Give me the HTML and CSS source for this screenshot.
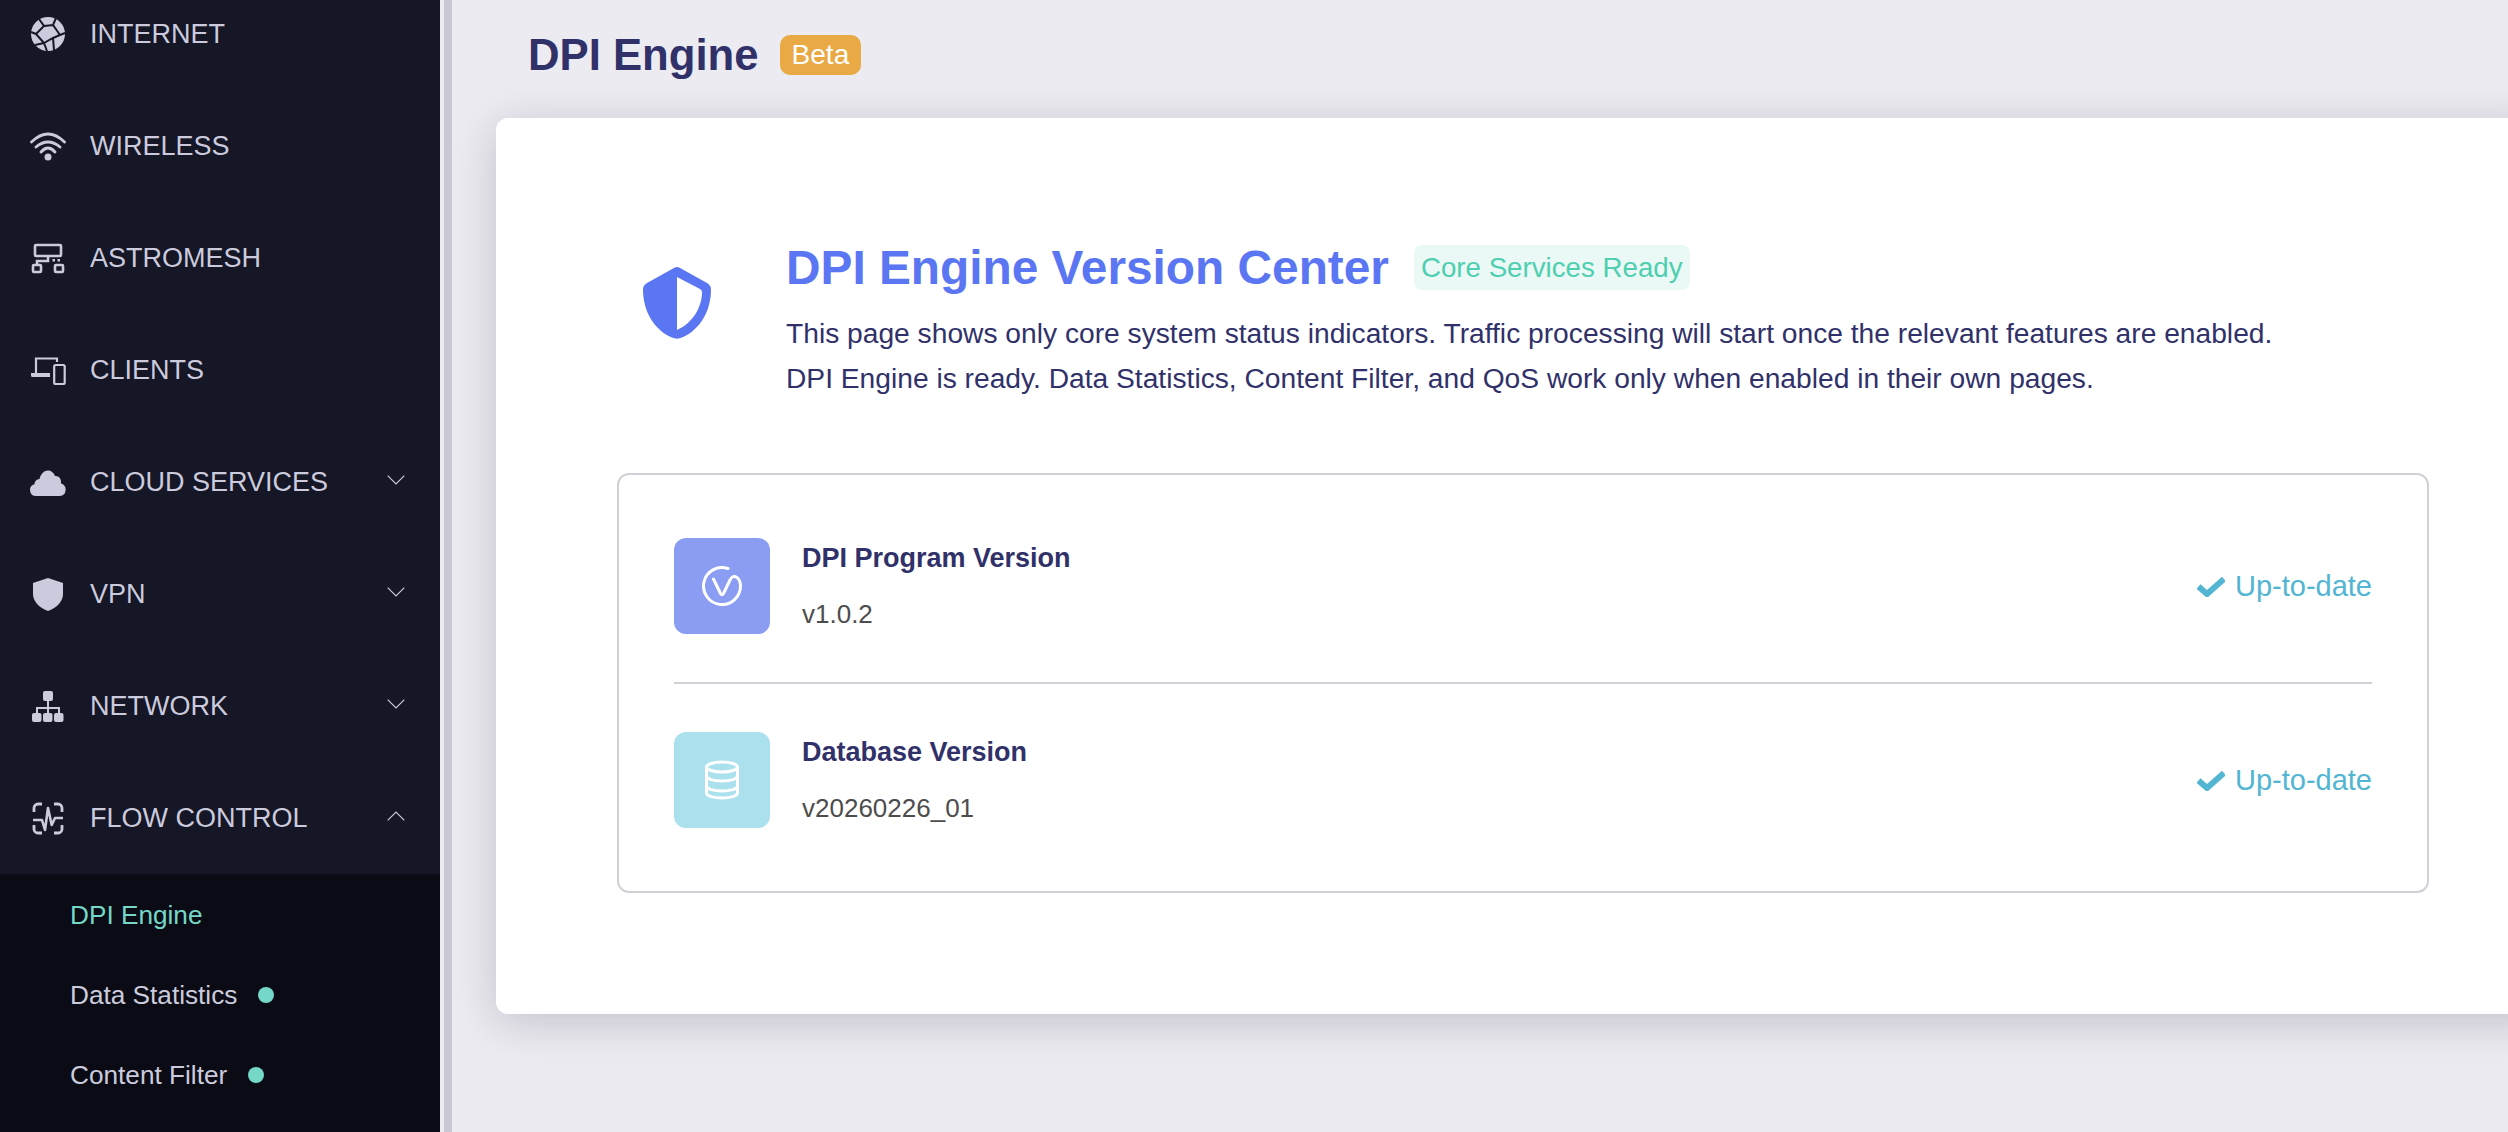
FILE: index.html
```html
<!DOCTYPE html>
<html lang="en">
<head>
    <meta charset="UTF-8">
    <meta name="viewport" content="width=device-width, initial-scale=1.0">
    <title>DPI Engine</title>
    <link rel="stylesheet" href="styles.css">
</head>
<body>
    <aside class="sidebar">
        <ul class="menu">
            <li class="menu-item">
                <svg class="menu-icon" viewBox="0 0 36 36"><circle cx="18" cy="18" r="17" fill="#cbcbdd"/><path d="M9 3l5 7-8 8 8 9 3 8M14 10l9-1 7 10-7 3-9 5M23 9l3-7M23 22l1 12M30 19l5-2M1 16l5 2M14 27l-9 2" fill="none" stroke="#151626" stroke-width="2"/></svg>
                <span>INTERNET</span>
            </li>
            <li class="menu-item">
                <svg class="menu-icon" viewBox="0 0 36 36"><path d="M1.500 14Q18-2 34.500 14M6 19Q18 9 30 19M11 24Q18 16 25 24" fill="none" stroke="#cbcbdd" stroke-width="2.800" stroke-linecap="round"/><circle cx="18" cy="29" r="3.500" fill="#cbcbdd"/></svg>
                <span>WIRELESS</span>
            </li>
            <li class="menu-item">
                <svg class="menu-icon" viewBox="0 0 36 36"><g fill="none" stroke="#cbcbdd" stroke-width="2.600"><rect x="5" y="5" width="26" height="11" rx="1"/><rect x="3" y="25" width="8" height="7" rx="1"/><rect x="25" y="25" width="8" height="7" rx="1"/><path d="M18 16v5H7v4"/></g><path d="M22.500 19H25v2.500h-2.500zM27.500 19H30v2.500h-2.500z" fill="#cbcbdd"/></svg>
                <span>ASTROMESH</span>
            </li>
            <li class="menu-item">
                <svg class="menu-icon" viewBox="0 0 36 36"><g fill="none" stroke="#cbcbdd" stroke-width="2.200"><path d="M6 22V6.500h21V10"/><rect x="24.200" y="13" width="10.500" height="19" rx="1.500"/></g><path d="M1 21h19v4H2.500A1.500 1.500 0 0 1 1 23.500z" fill="#cbcbdd"/></svg>
                <span>CLIENTS</span>
            </li>
            <li class="menu-item">
                <svg class="menu-icon" viewBox="0 0 36 36"><path d="M6 32a6 6 0 0 1-1.500-11.800C4.500 18 6.500 15 9.500 15 11 9.500 14 6.500 18 6.500c3.500 0 6 2.500 7 5.500 4-.5 6.500 3 6 7.500A6.400 6.400 0 0 1 30 32z" fill="#cbcbdd"/></svg>
                <span>CLOUD SERVICES</span>
                <svg class="chevron" viewBox="0 0 18 10"><path d="M.7.7L9 9l8.300-8.300"/></svg>
            </li>
            <li class="menu-item">
                <svg class="menu-icon" viewBox="0 0 36 36"><path d="M18 2l15 5v11c0 8-7 14-15 17C10 32 3 26 3 18V7z" fill="#cbcbdd"/></svg>
                <span>VPN</span>
                <svg class="chevron" viewBox="0 0 18 10"><path d="M.7.7L9 9l8.300-8.300"/></svg>
            </li>
            <li class="menu-item">
                <svg class="menu-icon" viewBox="0 0 36 36"><g fill="#cbcbdd"><rect x="13" y="3" width="10" height="10" rx="2"/><rect x="2" y="25" width="9.500" height="9" rx="2"/><rect x="13" y="25" width="9.500" height="9" rx="2"/><rect x="24" y="25" width="9.500" height="9" rx="2"/></g><path d="M18 13v12M7 25v-5h22v5" fill="none" stroke="#cbcbdd" stroke-width="2"/></svg>
                <span>NETWORK</span>
                <svg class="chevron" viewBox="0 0 18 10"><path d="M.7.7L9 9l8.300-8.300"/></svg>
            </li>
            <li class="menu-item">
                <svg class="menu-icon" viewBox="0 0 36 36"><path d="M4 12V8a4 4 0 0 1 4-4h4M24 4h4a4 4 0 0 1 4 4v4M4 25v4a4 4 0 0 0 4 4h4M24 33h4a4 4 0 0 0 4-4v-4" fill="none" stroke="#cbcbdd" stroke-width="2.800"/><path d="M3 20h9l3 10 3-22 3.700 17L25 18h8" fill="none" stroke="#cbcbdd" stroke-width="2.600" stroke-linejoin="round"/></svg>
                <span>FLOW CONTROL</span>
                <svg class="chevron" viewBox="0 0 18 10"><path d="M.7 9.300L9 1l8.300 8.300"/></svg>
            </li>
        </ul>
        <ul class="submenu">
            <li class="submenu-item active">DPI Engine</li>
            <li class="submenu-item">Data Statistics<i class="dot"></i></li>
            <li class="submenu-item">Content Filter<i class="dot"></i></li>
        </ul>
    </aside>

    <main class="main">
        <div class="page-head">
            <h1>DPI Engine</h1>
            <span class="beta">Beta</span>
        </div>

        <section class="card">
            <div class="intro">
                <svg class="intro-icon" viewBox="0 0 68 72"><path d="M34 0c1 0 1.800.3 2.600.7l27 15c2.700 1.500 4.400 3.600 4.400 6.800C68 44 57 63 39 70.500c-3.200 1.500-6.800 1.500-10 0C11 63 0 44 0 22.500c0-3.200 1.700-5.300 4.400-6.800l27-15C32.200.3 33 0 34 0z" fill="#5b76f2"/><path d="M34 10l23 12q2 1 2 3c0 15-9 31-25 38z" fill="#fff"/></svg>
                <div class="intro-text">
                    <div class="intro-title">
                        <h2>DPI Engine Version Center</h2>
                        <span class="ready">Core Services Ready</span>
                    </div>
                    <p>This page shows only core system status indicators. Traffic processing will start once the relevant features are enabled.</p>
                    <p>DPI Engine is ready. Data Statistics, Content Filter, and QoS work only when enabled in their own pages.</p>
                </div>
            </div>

            <div class="versions">
                <div class="version-row">
                    <div class="version-icon blue">
                        <svg viewBox="0 0 40 40"><path d="M26 2.500A18.500 18.500 0 1 0 38.500 20C38.500 13 32 6 28 14L21.500 27.500Q20 30 18.500 27.500L11.500 13" fill="none" stroke="#fff" stroke-width="3" stroke-linecap="round" stroke-linejoin="round"/></svg>
                    </div>
                    <div class="version-text">
                        <div class="version-name">DPI Program Version</div>
                        <div class="version-num">v1.0.2</div>
                    </div>
                    <div class="version-status">
                        <svg viewBox="0 0 28 21"><path d="M1.500 10.500L10 18 27 3" fill="none" stroke="#52b5d2" stroke-width="6" stroke-linejoin="round"/></svg>
                        Up-to-date
                    </div>
                </div>
                <div class="version-row">
                    <div class="version-icon cyan">
                        <svg viewBox="0 0 40 40"><g fill="none" stroke="#fff" stroke-width="3"><ellipse cx="20" cy="7" rx="15.500" ry="5"/><path d="M4.500 7v26c0 3 7 5 15.500 5s15.500-2 15.500-5V7"/><path d="M4.500 16c0 3 7 5 15.500 5s15.500-2 15.500-5M4.500 26c0 3 7 5 15.500 5s15.500-2 15.500-5"/></g></svg>
                    </div>
                    <div class="version-text">
                        <div class="version-name">Database Version</div>
                        <div class="version-num">v20260226_01</div>
                    </div>
                    <div class="version-status">
                        <svg viewBox="0 0 28 21"><path d="M1.500 10.500L10 18 27 3" fill="none" stroke="#52b5d2" stroke-width="6" stroke-linejoin="round"/></svg>
                        Up-to-date
                    </div>
                </div>
            </div>
        </section>
    </main>
</body>
</html>
```

FILE: styles.css
```css
body {
    font-family: "Liberation Sans", Arial, sans-serif;
    background-color: #ecebf1;
    margin: 0;
    height: 1132px;
    overflow: hidden;
    display: flex;
}
ul {
    list-style: none;
    margin: 0;
    padding: 0;
}

/* sidebar, scrolled down a little in the shot */
.sidebar {
    width: 440px;
    height: 1132px;
    flex-shrink: 0;
    background-color: #0a0b14;
    overflow: hidden;
}
.menu {
    margin-top: -22px;
    background-color: #151626;
}
.menu-item {
    height: 112px;
    display: flex;
    align-items: center;
    padding: 0 35px 0 30px;
    color: #cbcbdd;
    font-size: 27px;
}
.menu-icon {
    width: 36px;
    height: 36px;
    margin-right: 24px;
    flex-shrink: 0;
}
.chevron {
    width: 18px;
    height: 10px;
    margin-left: auto;
    margin-bottom: 4px;
    fill: none;
    stroke: #cbcbdd;
    stroke-width: 1.2;
}
.submenu {
    padding-top: 1px;
}
.submenu-item {
    height: 80px;
    display: flex;
    align-items: center;
    padding-left: 70px;
    color: #cbcbdd;
    font-size: 26.2px;
}
.submenu-item.active {
    color: #74d7c7;
}
.dot {
    width: 16px;
    height: 16px;
    border-radius: 50%;
    margin-left: 21px;
    background-color: #74d7c7;
}

/* main area */
.main {
    flex: 1;
    min-width: 0;
    margin-left: 4px;
    border-left: 8px solid #c9c9d6;
}
.page-head {
    height: 110px;
    display: flex;
    align-items: center;
    gap: 21px;
    padding-left: 76px;
    margin-bottom: 8px;
}
h1 {
    margin: 0;
    color: #31316a;
    font-size: 43.7px;
    font-weight: bold;
}
.beta {
    padding: 0 12px;
    height: 40px;
    line-height: 40px;
    border-radius: 10px;
    background-color: #e9a945;
    color: white;
    font-size: 28px;
}
.card {
    width: 2054px;
    height: 896px;
    box-sizing: border-box;
    margin-left: 44px;
    padding: 122px 121px 0;
    background-color: white;
    border-radius: 12px;
    box-shadow: 0 8px 44px rgba(30, 30, 60, 0.2);
}
.intro {
    display: flex;
    padding-left: 26px;
    margin-bottom: 72px;
}
.intro-icon {
    width: 68px;
    height: 72px;
    margin-top: 27px;
    margin-right: 75px;
    flex-shrink: 0;
}
.intro-title {
    display: flex;
    align-items: center;
    gap: 25px;
    margin-bottom: 16px;
}
h2 {
    margin: 0;
    color: #5b76f2;
    font-size: 47.8px;
    line-height: 55px;
    font-weight: bold;
}
.ready {
    padding: 0 7px;
    height: 45px;
    line-height: 45px;
    border-radius: 8px;
    background-color: #eaf9f5;
    color: #4fcfb0;
    font-size: 27.7px;
}
.intro-text p {
    margin: 0;
    color: #31316a;
    font-size: 28.2px;
    line-height: 45px;
}
.versions {
    border: 2px solid #d0d0d6;
    border-radius: 12px;
    padding: 15px 55px;
}
.version-row {
    display: flex;
    align-items: center;
    padding: 48px 0;
}
.version-row + .version-row {
    border-top: 2px solid #d0d0d6;
}
.version-icon {
    width: 96px;
    height: 96px;
    border-radius: 12px;
    display: flex;
    align-items: center;
    justify-content: center;
    margin-right: 32px;
}
.version-icon svg {
    width: 40px;
    height: 40px;
}
.blue {
    background-color: #8a9df2;
}
.cyan {
    background-color: #abe0ed;
}
.version-name {
    color: #31316a;
    font-size: 27px;
    font-weight: bold;
    margin-bottom: 25px;
}
.version-num {
    color: #4d4d4d;
    font-size: 26px;
}
.version-status {
    margin-left: auto;
    display: flex;
    align-items: center;
    gap: 10px;
    color: #52b5d2;
    font-size: 29px;
}
.version-status svg {
    width: 28px;
    height: 21px;
}
```
